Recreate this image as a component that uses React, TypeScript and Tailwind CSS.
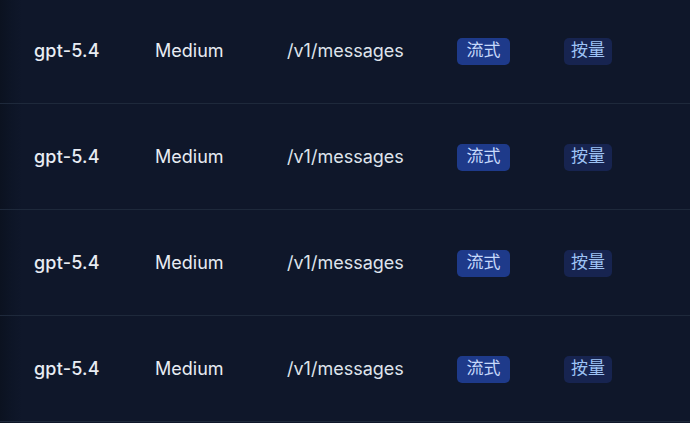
import React from "react";

interface Row {
  model: string;
  effort: string;
  path: string;
  stream: string;
  billing: string;
}

const rows: Row[] = Array.from({ length: 4 }, () => ({
  model: "gpt-5.4",
  effort: "Medium",
  path: "/v1/messages",
  stream: "流式",
  billing: "按量",
}));

export default function App() {
  return (
    <div
      className="relative h-[423px] w-[690px] overflow-hidden bg-[#0f172a]"
      style={{ fontFamily: 'Inter, "Noto Sans CJK SC", sans-serif' }}
    >
      {/* left edge shade */}
      <div className="pointer-events-none absolute inset-y-0 left-0 w-[22px] bg-gradient-to-r from-[#0b1220] via-[#0d1526] to-transparent" />

      <div className="relative -mt-[2px]">
        {rows.map((row, i) => (
          <div
            key={i}
            className="flex h-[106px] items-center border-b border-[#1e293b] text-[18px] text-[#e8ecf3]"
          >
            <div className="w-[155px] pl-[34px] font-medium tracking-[0.2px]">{row.model}</div>
            <div className="w-[132px]">{row.effort}</div>
            <div className="w-[170px] text-[#dfe4ec]">{row.path}</div>
            <div className="w-[107px]">
              <span className="inline-flex h-[27px] w-[53px] items-center justify-center rounded-[5px] bg-[#1e3a8a] text-[17px] text-[#c7d9fb]">
                {row.stream}
              </span>
            </div>
            <div>
              <span className="inline-flex h-[27px] w-[48px] items-center justify-center rounded-[5px] bg-[#172450] text-[17px] text-[#9ec3f5]">
                {row.billing}
              </span>
            </div>
          </div>
        ))}
      </div>
    </div>
  );
}
